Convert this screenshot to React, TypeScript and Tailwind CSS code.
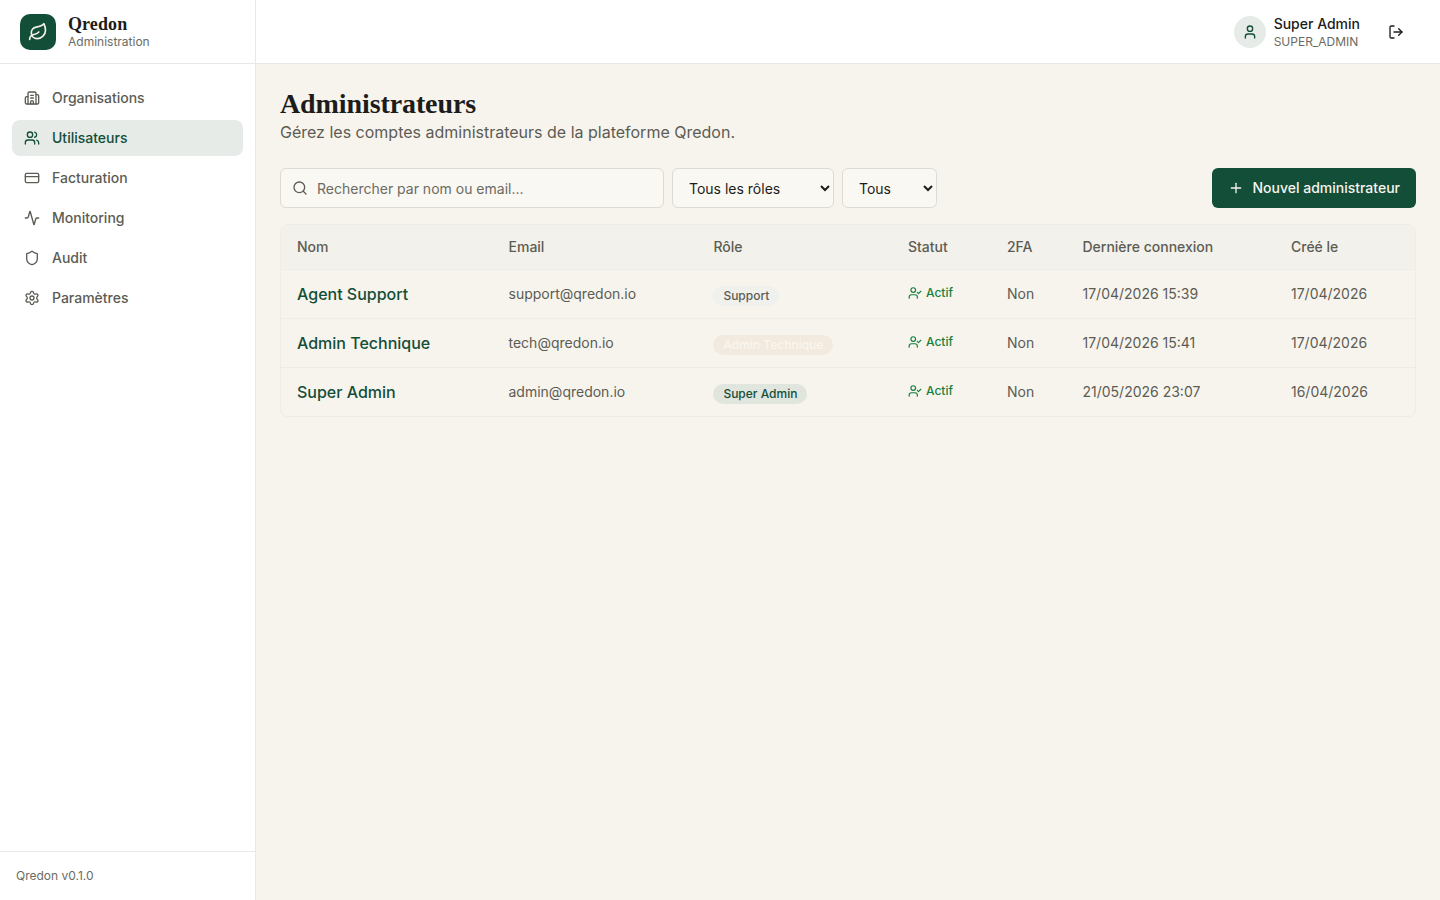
import { Activity, Building2, CreditCard, Leaf, LogOut, Plus, Search, Settings, Shield, User, UserCheck, Users } from "lucide-react";

const nav = [
  { label: "Organisations", Icon: Building2 },
  { label: "Utilisateurs", Icon: Users, active: true },
  { label: "Facturation", Icon: CreditCard },
  { label: "Monitoring", Icon: Activity },
  { label: "Audit", Icon: Shield },
  { label: "Paramètres", Icon: Settings },
];

const rows = [
  { name: "Agent Support", email: "support@qredon.io", role: "Support", cls: "bg-[#f0f0ed] text-[#5c5c54]", last: "17/04/2026 15:39", created: "17/04/2026" },
  { name: "Admin Technique", email: "tech@qredon.io", role: "Admin Technique", cls: "bg-[#f2eade] text-[#faf6ef]", last: "17/04/2026 15:41", created: "17/04/2026" },
  { name: "Super Admin", email: "admin@qredon.io", role: "Super Admin", cls: "bg-[#e0e5de] text-[#134e38]", last: "21/05/2026 23:07", created: "16/04/2026" },
];

const heads = ["Nom", "Email", "Rôle", "Statut", "2FA", "Dernière connexion", "Créé le"];

export default function App() {
  return (
    <div className="flex h-[900px] bg-[#f7f4ee] font-['Inter',sans-serif] text-[#1c1c1a] antialiased">
      <aside className="flex w-[256px] shrink-0 flex-col border-r border-[#e8e8e5] bg-white">
        <div className="flex h-[64px] items-center gap-3 border-b border-[#e8e8e5] px-5">
          <div className="flex h-9 w-9 items-center justify-center rounded-[10px] bg-[#134e38]">
            <Leaf size={20} strokeWidth={2} className="text-[#f7f4ee]" />
          </div>
          <div className="flex flex-col">
            <span className="font-['Liberation_Serif',serif] text-[18px] font-bold leading-[20px] tracking-[0.1px]">Qredon</span>
            <span className="text-xs leading-4 text-[#6b6b63]">Administration</span>
          </div>
        </div>
        <nav className="flex flex-1 flex-col gap-1 px-3 py-4">
          {nav.map(({ label, Icon, active }) => (
            <div
              key={label}
              className={`flex h-9 items-center gap-3 rounded-lg px-3 text-sm font-medium ${active ? "bg-[#e6ebe8] text-[#134e38]" : "text-[#5c5c54]"}`}
            >
              <Icon size={16} strokeWidth={2} />
              <span>{label}</span>
            </div>
          ))}
        </nav>
        <div className="flex h-[49px] items-center border-t border-[#e8e8e5] px-4 text-xs text-[#6b6b63]">Qredon v0.1.0</div>
      </aside>

      <div className="flex min-w-0 flex-1 flex-col">
        <header className="flex h-[64px] shrink-0 items-center justify-end border-b border-[#e8e8e5] bg-white px-6">
          <div className="flex items-center gap-2">
            <div className="flex h-8 w-8 items-center justify-center rounded-full bg-[#e6ebe8] text-[#134e38]">
              <User size={16} />
            </div>
            <div className="flex flex-col">
              <span className="text-sm font-medium leading-5">Super Admin</span>
              <span className="text-xs leading-4 text-[#6b6b63]">SUPER_ADMIN</span>
            </div>
          </div>
          <button className="ml-4 flex h-10 w-10 items-center justify-center rounded-lg text-[#1c1c1a]">
            <LogOut size={16} />
          </button>
        </header>

        <main className="flex-1 p-6">
          <h1 className="font-['Liberation_Serif',serif] text-[28px] font-bold leading-8 tracking-[-0.1px]">Administrateurs</h1>
          <p className="text-base leading-6 text-[#5c5c54]">Gérez les comptes administrateurs de la plateforme Qredon.</p>

          <div className="mt-6 flex items-center gap-2">
            <div className="flex h-10 w-[384px] items-center gap-[9px] rounded-md border border-[#dcdbd5] bg-[#faf8f3] pr-3 pl-[11px]">
              <Search size={16} className="shrink-0 text-[#5c5c54]" />
              <input
                className="min-w-0 flex-1 bg-transparent pt-[1px] text-sm outline-none placeholder:text-[#6b6b63]"
                placeholder="Rechercher par nom ou email..."
              />
            </div>
            <select className="h-10 w-[162px] rounded-md border border-[#dcdbd5] bg-[#faf8f3] px-3 text-sm text-[#1c1c1a]" defaultValue="a">
              <option value="a">Tous les rôles</option>
            </select>
            <select className="h-10 w-[95px] rounded-md border border-[#dcdbd5] bg-[#faf8f3] px-3 text-sm text-[#1c1c1a]" defaultValue="a">
              <option value="a">Tous</option>
            </select>
            <button className="ml-auto flex h-10 items-center gap-2 rounded-md bg-[#134e38] px-4 text-sm font-medium text-[#f7f4ee]">
              <Plus size={16} />
              Nouvel administrateur
            </button>
          </div>

          <div className="mt-4 overflow-hidden rounded-lg border border-[#eeece7]">
            <table className="w-full table-fixed border-collapse text-sm">
              <colgroup>
                <col className="w-[211.5px]" />
                <col className="w-[204.9px]" />
                <col className="w-[194.6px]" />
                <col className="w-[99px]" />
                <col className="w-[75.5px]" />
                <col className="w-[208.5px]" />
                <col />
              </colgroup>
              <thead>
                <tr className="h-[44px] bg-[#f2f1eb]">
                  {heads.map((h) => (
                    <th key={h} className="px-4 text-left font-medium text-[#5c5c54]">{h}</th>
                  ))}
                </tr>
              </thead>
              <tbody>
                {rows.map((r) => (
                  <tr key={r.name} className="h-[49px] border-t border-[#eeece7] text-[#5c5c54]">
                    <td className="px-4 text-base font-medium text-[#134e38]">{r.name}</td>
                    <td className="px-4">{r.email}</td>
                    <td className="px-4">
                      <span className={`relative top-[2px] inline-flex h-5 items-center rounded-full px-2.5 text-xs font-medium ${r.cls}`}>{r.role}</span>
                    </td>
                    <td className="px-4">
                      <span className="relative top-[1px] inline-flex items-center gap-1 text-xs font-medium text-[#15803d]">
                        <UserCheck size={14} />
                        Actif
                      </span>
                    </td>
                    <td className="px-4">Non</td>
                    <td className="px-4">{r.last}</td>
                    <td className="px-4">{r.created}</td>
                  </tr>
                ))}
              </tbody>
            </table>
          </div>
        </main>
      </div>
    </div>
  );
}
